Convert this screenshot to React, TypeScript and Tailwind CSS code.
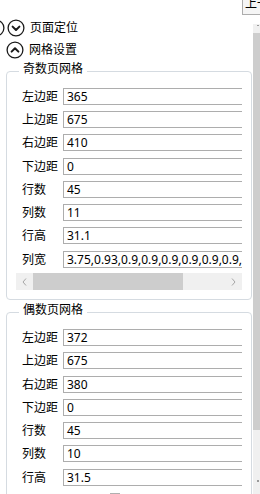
import React from "react";

const FONT = { fontFamily: '"Noto Sans", "Noto Sans CJK SC", sans-serif' };

function ChevronCircle({ up }: { up?: boolean }) {
  return (
    <svg width="18" height="18" viewBox="0 0 18 18" className="shrink-0">
      <circle cx="9" cy="9" r="7.9" fill="none" stroke="#1a1a1a" strokeWidth="1.3" />
      {up ? (
        <polyline points="5.6,10.6 9,7.2 12.4,10.6" fill="none" stroke="#1a1a1a" strokeWidth="2" strokeLinecap="round" strokeLinejoin="round" />
      ) : (
        <polyline points="5.6,7.6 9,11 12.4,7.6" fill="none" stroke="#1a1a1a" strokeWidth="2" strokeLinecap="round" strokeLinejoin="round" />
      )}
    </svg>
  );
}

type Row = { label: string; value: string; mt: string };

function FieldRow({ row }: { row: Row }) {
  return (
    <div className={`flex items-center h-[17px] pl-[6px] ${row.mt}`}>
      <span className="w-[41px] shrink-0 text-[12px] leading-[17px] text-black">{row.label}</span>
      <div className="flex-1 min-w-0 h-[17px] border-l border-t border-b border-[#adadad] pl-[3px] text-[12px] leading-[15px] text-black whitespace-nowrap overflow-hidden">
        {row.value}
      </div>
    </div>
  );
}

const odd: Row[] = [
  { label: "左边距", value: "365", mt: "mt-[8px]" },
  { label: "上边距", value: "675", mt: "mt-[6px]" },
  { label: "右边距", value: "410", mt: "mt-[6px]" },
  { label: "下边距", value: "0", mt: "mt-[7px]" },
  { label: "行数", value: "45", mt: "mt-[6px]" },
  { label: "列数", value: "11", mt: "mt-[6px]" },
  { label: "行高", value: "31.1", mt: "mt-[6px]" },
  { label: "列宽", value: "3.75,0.93,0.9,0.9,0.9,0.9,0.9,0.9,0.9,0.9,0.9,0.9", mt: "mt-[7px]" },
];

const even: Row[] = [
  { label: "左边距", value: "372", mt: "mt-[8px]" },
  { label: "上边距", value: "675", mt: "mt-[6px]" },
  { label: "右边距", value: "380", mt: "mt-[7px]" },
  { label: "下边距", value: "0", mt: "mt-[6px]" },
  { label: "行数", value: "45", mt: "mt-[6px]" },
  { label: "列数", value: "10", mt: "mt-[6px]" },
  { label: "行高", value: "31.5", mt: "mt-[7px]" },
];

export default function App() {
  return (
    <div className="relative w-[260px] h-[494px] overflow-hidden bg-white flex" style={FONT}>
      {/* main column */}
      <div className="w-[253px] shrink-0 flex flex-col">
        <div className="mt-[19px] h-[18px] flex items-center">
          <svg width="18" height="18" viewBox="0 0 18 18" className="shrink-0 ml-[-13px]">
            <circle cx="9" cy="9" r="7.9" fill="none" stroke="#1a1a1a" strokeWidth="1.3" />
          </svg>
          <div className="ml-[2px]"><ChevronCircle /></div>
          <span className="ml-[5px] text-[12px] leading-[18px] text-black">页面定位</span>
        </div>
        <div className="mt-[4px] h-[18px] flex items-center pl-[6px]">
          <ChevronCircle up />
          <span className="ml-[5px] text-[12px] leading-[18px] text-black">网格设置</span>
        </div>

        <fieldset className="mt-[3px] ml-[6px] w-[246px] border border-[#d5dbe1] rounded-[4px] px-[9px] pb-[9px] pt-0">
          <legend className="ml-[3px] px-[4px] text-[12px] leading-[14px] pb-[4px] text-black">奇数页网格</legend>
          <div className="flex flex-col w-[226px] overflow-hidden">
            {odd.map((r) => (
              <FieldRow key={r.label} row={r} />
            ))}
            <div className="mt-[5px] h-[17px] flex bg-[#f0f0f0]">
              <div className="w-[17px] shrink-0 flex items-center justify-center">
                <svg width="5" height="8" viewBox="0 0 5 8">
                  <polyline points="4,0.5 1,4 4,7.5" fill="none" stroke="#a6a6a6" strokeWidth="1" />
                </svg>
              </div>
              <div className="w-[150px] shrink-0 h-full bg-[#cdcdcd]" />
              <div className="flex-1" />
              <div className="w-[17px] shrink-0 flex items-center justify-center">
                <svg width="5" height="8" viewBox="0 0 5 8">
                  <polyline points="1,0.5 4,4 1,7.5" fill="none" stroke="#a6a6a6" strokeWidth="1" />
                </svg>
              </div>
            </div>
          </div>
        </fieldset>

        <fieldset className="mt-[3px] ml-[6px] w-[246px] border border-[#d5dbe1] rounded-[4px] px-[9px] pb-[9px] pt-0">
          <legend className="ml-[3px] px-[4px] text-[12px] leading-[14px] pb-[4px] text-black">偶数页网格</legend>
          <div className="flex flex-col w-[226px] overflow-hidden">
            {even.map((r) => (
              <FieldRow key={r.label} row={r} />
            ))}
            <div className="mt-[7px] ml-[94px] w-[10px] h-[2px] bg-[#b0b0b0]" />
            <div className="h-[20px]" />
          </div>
        </fieldset>
      </div>

      {/* vertical scrollbar */}
      <div className="w-[7px] shrink-0 flex flex-col pt-[24px]">
        <div className="flex-1 bg-[#f0f0f0] flex flex-col">
          <div className="h-[9px] relative">
            <div className="absolute left-[4px] top-[1px] w-[2px] h-[1px] bg-[#9a9a9a]" />
          </div>
          <div className="h-[397px] bg-[#cdcdcd]" />
          <div className="flex-1 relative">
            <div className="absolute left-[4px] top-[50px] w-[2px] h-[2px] bg-[#9a9a9a]" />
          </div>
        </div>
      </div>

      {/* clipped top-right button */}
      <div className="absolute top-[-5px] left-[242px] w-[40px] h-[20px] border border-[#adadad] bg-[#f5f5f5] pl-[2px] text-[12px] leading-[16px] text-black whitespace-nowrap">
        上一
      </div>
    </div>
  );
}
